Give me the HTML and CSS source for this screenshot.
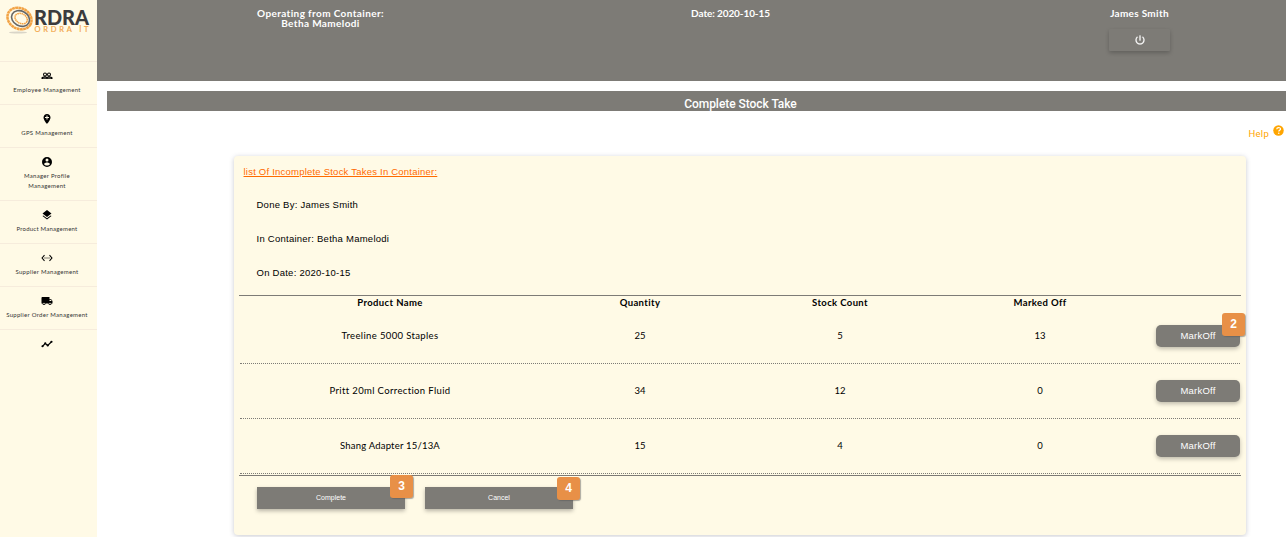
FILE: index.html
```html
<!DOCTYPE html>
<html lang="en">
<head>
<meta charset="utf-8">
<title>Complete Stock Take</title>
<link rel="stylesheet" href="styles.css">
</head>
<body>
<div class="app">
  <nav class="sidebar">
    <div class="logo">
      <svg width="97" height="61" viewBox="0 0 97 61">
        <ellipse cx="18" cy="32.500" rx="9" ry="1" fill="#d9d5c8"/>
        <g transform="rotate(28 19.500 18.500)" fill="none">
          <ellipse cx="19.500" cy="18.500" rx="12.500" ry="10.300" stroke="#f2a345" stroke-width="2.500" stroke-dasharray="2.800 .35"/>
          <ellipse cx="20.400" cy="18" rx="9.400" ry="7.400" stroke="#666" stroke-width="1.600"/>
          <ellipse cx="21" cy="17.800" rx="6.500" ry="4.800" stroke="#f2a345" stroke-width="1.500" stroke-dasharray="1.500 .5"/>
        </g>
        <text class="logo-name" x="34" y="24.600" textLength="55" lengthAdjust="spacingAndGlyphs">RDRA</text>
        <text class="logo-sub" x="34.500" y="32.300" textLength="54">ORDRA İT</text>
      </svg>
    </div>
    <a class="item"><svg class="icon" viewBox="0 0 24 24"><path fill-rule="evenodd" d="M8 5a4 4 0 100 8 4 4 0 000-8zm0 2a2 2 0 110 4 2 2 0 010-4zm8-2a4 4 0 100 8 4 4 0 000-8zm0 2a2 2 0 110 4 2 2 0 010-4zM1 18v-3c1-1.500 4-2 7-2 1.500 0 3 .3 4 .8 1-.5 2.500-.8 4-.8 3 0 6 .5 7 2v3zm3-1.500h7v-.5c-2-.7-5-.7-7 0zm9 0h7v-.5c-2-.7-5-.7-7 0z"/></svg><span class="label">Employee Management</span></a>
    <a class="item"><svg class="icon" viewBox="0 0 24 24"><path fill-rule="evenodd" d="M12 2C8 2 5 5.100 5 9c0 5.200 7 13 7 13s7-7.800 7-13c0-3.900-3-7-7-7zm-1 3h2v3h3v2h-3v3h-2v-3H8V8h3z"/></svg><span class="label">GPS Management</span></a>
    <a class="item"><svg class="icon" viewBox="0 0 24 24"><path d="M12 2a10 10 0 100 20 10 10 0 000-20zm0 3a3 3 0 110 6 3 3 0 010-6zm0 14.200c-2.500 0-4.700-1.280-6-3.220.03-1.990 4-3.080 6-3.080s5.970 1.090 6 3.080c-1.300 1.940-3.500 3.220-6 3.220z" fill-rule="evenodd"/></svg><span class="label">Manager Profile<br>Management</span></a>
    <a class="item"><svg class="icon" viewBox="0 0 24 24"><path d="M12 18.500l-7.400-5.700L3 14.100l9 7 9-7-1.600-1.300zM12 16l9-7-9-7-9 7z"/></svg><span class="label narrow">Product Management</span></a>
    <a class="item"><svg class="icon" viewBox="0 0 24 24"><path d="M7.800 6.800L6.200 5.500.7 12l5.500 6.500 1.600-1.300L3.400 12zM7 13h2v-2H7zm10-2h-2v2h2zm-6 2h2v-2h-2zm6.800-7.500l-1.600 1.300 4.400 5.200-4.400 5.200 1.600 1.300 5.500-6.500z"/></svg><span class="label">Supplier Management</span></a>
    <a class="item"><svg class="icon" viewBox="0 0 24 24"><path d="M20 8h-3V4H3C1.900 4 1 4.900 1 6v11h2a3 3 0 006 0h6a3 3 0 006 0h2v-5zM6 18.500a1.500 1.500 0 110-3 1.500 1.500 0 010 3zm13.500-9l2 2.500H17V9.500zM18 18.500a1.500 1.500 0 110-3 1.500 1.500 0 010 3z"/></svg><span class="label">Supplier Order Management</span></a>
    <a class="item"><svg class="icon" viewBox="0 0 24 24"><path d="M3 16.500l5.500-5.500 5 4L21 7.500" fill="none" stroke="#000" stroke-width="2.400"/><circle cx="3" cy="16.500" r="2.200"/><circle cx="8.500" cy="10.500" r="2.200"/><circle cx="13.500" cy="15" r="2.200"/><circle cx="21" cy="7.500" r="2.200"/></svg></a>
  </nav>
  <main class="main">
    <header class="topbar">
      <div>Operating from Container:<br>Betha Mamelodi</div>
      <div class="date">Date: 2020-10-15</div>
      <div class="user"><span>James Smith</span>
        <button class="power"><svg width="12" height="12" viewBox="0 0 24 24"><path d="M13 3h-2v10h2zm4.800 2.200l-1.400 1.400A7 7 0 1 1 7.600 6.600L6.200 5.200a9 9 0 1 0 11.600 0z" fill="#fff" stroke="#fff" stroke-width=".5"/></svg></button>
      </div>
    </header>
    <h1 class="title">Complete Stock Take</h1>
    <div class="help"><span>Help</span><svg width="11" height="11" viewBox="0 0 22 22"><circle cx="11" cy="11" r="10.500" fill="#ffa500"/><path d="M7.500 8.500c0-4.500 7.500-4.500 7.500-.5 0 2.500-3.500 2.500-3.500 5" fill="none" stroke="#fff" stroke-width="2.400"/><circle cx="11.500" cy="16.300" r="1.500" fill="#fff"/></svg></div>
    <section class="panel">
      <h2 class="subtitle">list Of Incomplete Stock Takes In Container:</h2>
      <p class="info">Done By: James Smith</p>
      <p class="info">In Container: Betha Mamelodi</p>
      <p class="info">On Date: 2020-10-15</p>
      <div class="table">
        <div class="row head"><span>Product Name</span><span>Quantity</span><span>Stock Count</span><span>Marked Off</span><span></span></div>
        <div class="row"><span class="cell name">Treeline 5000 Staples</span><span class="cell">25</span><span class="cell">5</span><span class="cell">13</span><div class="action"><button class="mark">MarkOff</button><b class="badge b2">2</b></div></div>
        <div class="row"><span class="cell name">Pritt 20ml Correction Fluid</span><span class="cell">34</span><span class="cell">12</span><span class="cell">0</span><div class="action"><button class="mark">MarkOff</button></div></div>
        <div class="row"><span class="cell name code">Shang Adapter 15/13A</span><span class="cell">15</span><span class="cell">4</span><span class="cell">0</span><div class="action"><button class="mark">MarkOff</button></div></div>
      </div>
      <div class="buttons">
        <div class="action"><button class="wide-btn">Complete</button><b class="badge b3">3</b></div>
        <div class="action"><button class="wide-btn">Cancel</button><b class="badge b4">4</b></div>
      </div>
    </section>
  </main>
</div>
</body>
</html>
```
FILE: styles.css
```css
* { box-sizing: border-box; }
body { margin: 0; background: #fff; font-family: Lato, sans-serif; font-variant-ligatures: none; color: #000; overflow: hidden; }
button { border: 0; padding: 0; margin: 0; background: #7d7b76; color: #fff; font-family: "Liberation Sans", Arial, sans-serif; }
.app { display: flex; height: 537px; }

.sidebar { width: 97px; flex: none; background: #fffae6; }
.logo { height: 61px; }
.logo svg { display: block; }
.logo-name { font: 900 21px Lato, sans-serif; fill: #3b3b3d; }
.logo-sub { font: 7.500px Lato, sans-serif; fill: #f2a345; stroke: #f2a345; stroke-width: .15; }
.item { display: flex; flex-direction: column; align-items: center; min-height: 43px; padding: 8px 3px 9px 0; border-top: 1px solid #f6ecdc; }
.icon { width: 12px; height: 12px; flex: none; }
.label { margin-top: 3px; font-size: 6px; line-height: 10px; color: #333; text-align: center; white-space: nowrap; letter-spacing: .29px; }
.narrow { letter-spacing: .23px; }

.main { flex: 1; min-width: 0; display: flex; flex-direction: column; }
.topbar { height: 81px; flex: none; background: #7d7b76; color: #fff; display: grid; grid-template-columns: 447px 373px 1fr; font-size: 10px; font-weight: 700; line-height: 10px; text-align: center; padding-top: 8px; letter-spacing: .38px; }
.topbar > div { margin-top: -.5px; }
.date { letter-spacing: -.1px; }
.user { display: flex; flex-direction: column; align-items: center; padding-left: 76px; letter-spacing: .3px; }
.power { width: 61px; height: 22px; margin-top: 11.500px; display: flex; align-items: center; justify-content: center; box-shadow: 0 2px 4px rgba(0,0,0,.22); border-radius: 1px; }
.title { margin: 10px 0 0 10px; height: 20px; flex: none; background: #7d7b76; color: #fff; font: 500 12px/26px Roboto, sans-serif; letter-spacing: -.05px; text-align: center; text-indent: 88px; }
.help { height: 45px; flex: none; display: flex; justify-content: flex-end; gap: 4px; padding: 14px 2px 0 0; font: 9.500px/18px Roboto, sans-serif; letter-spacing: .25px; color: #ffa500; }

.panel { width: 1012px; height: 379px; flex: none; margin-left: 137px; padding: 8px 5px 0; background: #fffae6; border-radius: 4px; box-shadow: 0 1px 5px rgba(60,64,90,.28); }
.subtitle { margin: 0 0 0 4.500px; height: 14px; font: 9.500px/15px "Liberation Sans", Arial, sans-serif; letter-spacing: .22px; color: #ff6a00; text-decoration: underline; }
.info { margin: 0 0 0 17.500px; height: 34px; padding-top: 20px; font: 9.500px/14px "Liberation Sans", Arial, sans-serif; letter-spacing: .25px; }
.table { margin-top: 15px; border-top: 1px solid #7d7b76; border-bottom: 1px solid #7d7b76; padding-bottom: 1px; font-size: 9.500px; }
.row { display: grid; grid-template-columns: 3fr 2fr 2fr 2fr 1fr; height: 55px; align-items: center; text-align: center; border-bottom: 1px dotted #7d7b76; margin: 0 1px; }
.head { height: 13px; border: 0; font-weight: 700; letter-spacing: .38px; line-height: 11px; padding-bottom: 1px; }
.cell { padding-bottom: 2px; }
.name { letter-spacing: .36px; }
.code { letter-spacing: .2px; }
.action { position: relative; display: flex; justify-content: flex-end; }
.mark { width: 84px; height: 22px; padding-bottom: 1px; border-radius: 5px; font-size: 9.500px; letter-spacing: .2px; box-shadow: 0 2px 4px rgba(0,0,0,.25); }
.buttons { display: flex; gap: 20px; padding: 11px 0 0 18px; }
.wide-btn { width: 148px; height: 22px; padding-bottom: 1px; font-size: 7px; box-shadow: 0 2px 4px rgba(0,0,0,.28); }
.badge { position: absolute; width: 23px; height: 23px; border-radius: 3px; background: #e89047; color: #fff; font: 700 12px/22px "Liberation Sans", Arial, sans-serif; text-align: center; box-shadow: 1px 1px 1px rgba(90,90,90,.5); }
.b2 { right: -5px; top: -12px; }
.b3 { right: -8px; top: -12px; }
.b4 { right: -7px; top: -10px; }
```
